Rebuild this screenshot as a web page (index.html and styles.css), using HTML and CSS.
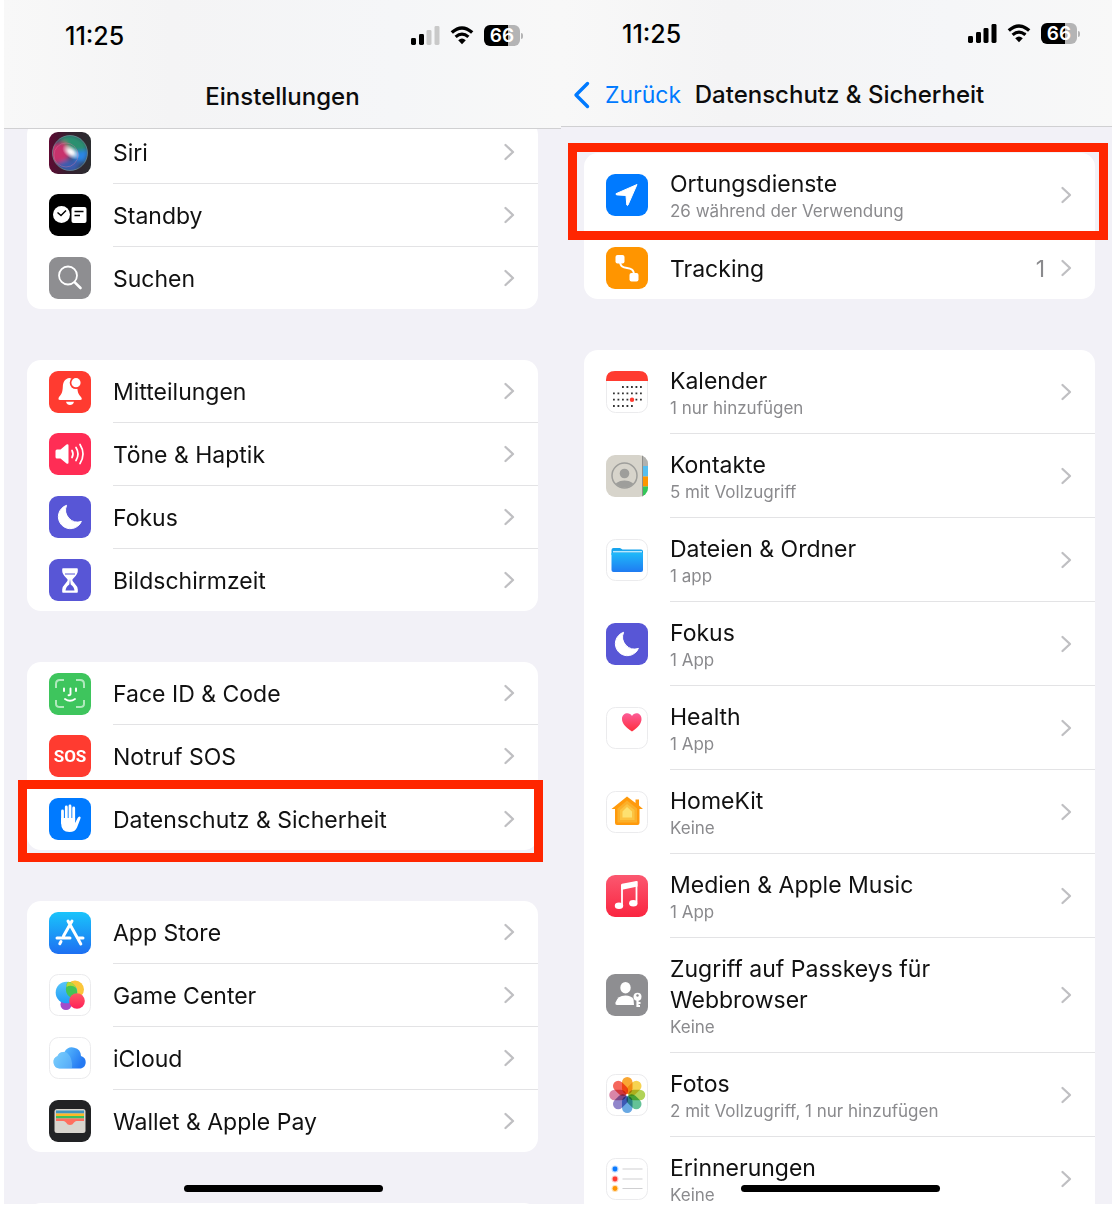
FILE: index.html
```
<!DOCTYPE html>
<html lang="de">
<head>
  <meta charset="UTF-8" />
  <meta name="viewport" content="width=device-width, initial-scale=1.0"/>
  <title>Einstellungen</title>
  <link rel="stylesheet" href="styles.css">
</head>
<body>
  <svg class="sprite" aria-hidden="true">
    <symbol id="chevron" viewBox="0 0 12 18">
      <path d="M2.500 2 L10 9 L2.500 16" fill="none" stroke="#bfbfc2" stroke-width="2.300" stroke-linecap="round" stroke-linejoin="round"/>
    </symbol>
    <symbol id="wifi" viewBox="0 0 24 19">
      <path d="M1.8 6.6 Q12 -2.6 22.2 6.6" fill="none" stroke="#000" stroke-width="3.4"/>
      <path d="M5.6 10.9 Q12 5.2 18.4 10.9" fill="none" stroke="#000" stroke-width="3.2"/>
      <path d="M8.2 14.2 Q12 11 15.8 14.2 L12 18.3 Z" fill="#000"/>
    </symbol>
    <symbol id="moon" viewBox="0 0 42 42">
      <path d="M17.6 9.3 A12 12 0 1 0 32.4 25.4 A12 12 0 0 1 17.6 9.3 Z" fill="#fff" stroke="#fff" stroke-width="1" stroke-linejoin="round"/>
    </symbol>
  </svg>

  <main class="screens">

    <section class="phone">
      <header class="bar">
        <div class="status">
          <span class="time">11:25</span>
          <svg class="signal" viewBox="0 0 29 19">
            <rect x="0" y="12" width="5" height="7" rx="1.4"/>
            <rect x="8" y="8" width="5" height="11" rx="1.4"/>
            <rect x="15.500" y="4" width="5" height="15" rx="1.4" fill="#c9c9c9"/>
            <rect x="23.500" y="0" width="5" height="19" rx="1.4" fill="#c9c9c9"/>
          </svg>
          <svg class="wifi"><use href="#wifi"/></svg>
          <span class="battery">66</span>
        </div>
        <div class="nav">
          <h1>Einstellungen</h1>
        </div>
      </header>

      <div class="list scrolled">
        <ul class="group">
          <li><a class="row" href="#">
            <svg class="icon" viewBox="0 0 42 42">
              <defs>
                <linearGradient id="siriBg"><stop offset="0" stop-color="#5e0a33"/><stop offset=".45" stop-color="#34202f"/><stop offset="1" stop-color="#2b2d30"/></linearGradient>
                <radialGradient id="siriGlow"><stop offset="0" stop-color="#fff"/><stop offset=".3" stop-color="#fff" stop-opacity=".85"/><stop offset="1" stop-color="#fff" stop-opacity="0"/></radialGradient>
                <clipPath id="siriOrb"><circle cx="21" cy="21" r="17.500"/></clipPath>
                <filter id="soft"><feGaussianBlur stdDeviation="2.2"/></filter>
              </defs>
              <rect width="42" height="42" rx="9" fill="url(#siriBg)"/>
              <g clip-path="url(#siriOrb)">
                <rect width="42" height="42" fill="#2f4a6a"/>
                <g filter="url(#soft)">
                  <path d="M10 6 Q24 -2 38 12 L36 22 L20 18 Z" fill="#2c9070"/>
                  <path d="M2 12 L16 10 L22 22 L14 32 L2 30 Z" fill="#c9306c"/>
                  <path d="M22 20 L40 18 L36 30 L26 28 Z" fill="#2a86e6"/>
                  <path d="M8 32 Q20 24 32 30 L26 40 L12 38 Z" fill="#3b5cae"/>
                </g>
                <ellipse cx="22" cy="20" rx="10" ry="6" fill="url(#siriGlow)" transform="rotate(35 22 20)"/>
              </g>
              <circle cx="21" cy="21" r="17.500" fill="none" stroke="#7fa6a4" stroke-width=".8" opacity=".7"/>
              <circle cx="17" cy="23" r="12" fill="none" stroke="#e07aa6" stroke-width=".6" opacity=".6"/>
            </svg>
            <span class="body"><span class="title">Siri</span><svg class="chevron"><use href="#chevron"/></svg></span>
          </a></li>
          <li><a class="row" href="#">
            <svg class="icon" viewBox="0 0 42 42">
              <rect width="42" height="42" rx="9"/>
              <circle cx="12.500" cy="20.500" r="8.500" fill="#fff"/>
              <path d="M8.500 18.500 L12 21.500 L17 16.500" fill="none" stroke="#000" stroke-width="1.500"/>
              <rect x="22.500" y="13" width="15" height="16" rx="2" fill="#fff"/>
              <path d="M25.500 17.500 H34.500 M25.500 21.500 H31" stroke="#000" stroke-width="1.500"/>
            </svg>
            <span class="body"><span class="title">Standby</span><svg class="chevron"><use href="#chevron"/></svg></span>
          </a></li>
          <li><a class="row" href="#">
            <svg class="icon" viewBox="0 0 42 42">
              <rect width="42" height="42" rx="9" fill="#8e8e91"/>
              <circle cx="19" cy="18.500" r="9" fill="none" stroke="#fff" stroke-width="1.800"/>
              <path d="M25.800 25.300 L31.500 31" stroke="#fff" stroke-width="2.600" stroke-linecap="round"/>
            </svg>
            <span class="body"><span class="title">Suchen</span><svg class="chevron"><use href="#chevron"/></svg></span>
          </a></li>
        </ul>

        <ul class="group">
          <li><a class="row" href="#">
            <svg class="icon" viewBox="0 0 42 42">
              <rect width="42" height="42" rx="9" fill="#ff3b30"/>
              <path d="M20.500 7 C16 7.500 14 11 13.800 16 C13.600 21 12.500 23.500 10 26 Q8.500 29 11 29 H31 Q34 29 32 26 C29.500 23.500 28.500 21 28.300 16 L26 8 Z" fill="#fff"/>
              <path d="M17 30.700 H25 Q24 34 21 34 Q18 34 17 30.700 Z" fill="#fff"/>
              <circle cx="27" cy="11.700" r="6.300" fill="#ff3b30"/>
              <circle cx="27" cy="11.700" r="4.600" fill="#fff"/>
            </svg>
            <span class="body"><span class="title">Mitteilungen</span><svg class="chevron"><use href="#chevron"/></svg></span>
          </a></li>
          <li><a class="row" href="#">
            <svg class="icon" viewBox="0 0 42 42">
              <rect width="42" height="42" rx="9" fill="#ff2d55"/>
              <path d="M8 16.500 H11.500 L17.500 11.500 Q19.500 10.500 19.500 12.500 V29.500 Q19.500 31.500 17.500 30.500 L11.500 25.500 H8 Q6.500 25.500 6.500 24 V18 Q6.500 16.500 8 16.500 Z" fill="#fff"/>
              <g fill="none" stroke="#fff" stroke-width="1.700" stroke-linecap="round">
                <path d="M23 17.500 Q25 21 23 24.500"/>
                <path d="M27 14.500 Q31 21 27 27.500"/>
                <path d="M31 11.500 Q37 21 31 30.500"/>
              </g>
            </svg>
            <span class="body"><span class="title">Töne &amp; Haptik</span><svg class="chevron"><use href="#chevron"/></svg></span>
          </a></li>
          <li><a class="row" href="#">
            <svg class="icon" viewBox="0 0 42 42">
              <rect width="42" height="42" rx="9" fill="#5856d6"/>
              <use href="#moon"/>
            </svg>
            <span class="body"><span class="title">Fokus</span><svg class="chevron"><use href="#chevron"/></svg></span>
          </a></li>
          <li><a class="row" href="#">
            <svg class="icon" viewBox="0 0 42 42">
              <rect width="42" height="42" rx="9" fill="#5856d6"/>
              <path d="M14 10 H28 V12 C28 16.500 22.500 18.500 22.500 21 C22.500 24 28 26 28 30.500 V33 H14 V30.500 C14 26 19.500 24 19.500 21 C19.500 18.500 14 16.500 14 12 Z" fill="#fff" stroke="#fff" stroke-width="1.600" stroke-linejoin="round"/>
              <path d="M16 15 H26" stroke="#5856d6" stroke-width="1"/>
              <path d="M16.500 31.500 Q17 27.500 20.300 25.500 L21 20 L21.700 25.500 Q25 27.500 25.500 31.500 Z" fill="#5856d6"/>
            </svg>
            <span class="body"><span class="title">Bildschirmzeit</span><svg class="chevron"><use href="#chevron"/></svg></span>
          </a></li>
        </ul>

        <ul class="group">
          <li><a class="row" href="#">
            <svg class="icon" viewBox="0 0 42 42">
              <rect width="42" height="42" rx="9" fill="#3ec55d"/>
              <path d="M7 15 V11 Q7 7 11 7 H15 M27 7 H31 Q35 7 35 11 V15 M35 27 V31 Q35 34 31 34 H27 M15 34 H11 Q7 34 7 31 V27" fill="none" stroke="#b0e9bd" stroke-width="2"/>
              <path d="M15 15.500 V18 M27 15.500 V18 M21.500 15.500 V21 Q21.500 22.500 19.500 22.200 M16 26 Q21 29.500 26 26" fill="none" stroke="#fff" stroke-width="1.900" stroke-linecap="round"/>
            </svg>
            <span class="body"><span class="title">Face ID &amp; Code</span><svg class="chevron"><use href="#chevron"/></svg></span>
          </a></li>
          <li><a class="row" href="#">
            <svg class="icon" viewBox="0 0 42 42">
              <rect width="42" height="42" rx="9" fill="#ff3b30"/>
              <text class="sos" x="21" y="27" text-anchor="middle">SOS</text>
            </svg>
            <span class="body"><span class="title">Notruf SOS</span><svg class="chevron"><use href="#chevron"/></svg></span>
          </a></li>
          <li class="marked marked-last"><a class="row" href="#">
            <svg class="icon" viewBox="0 0 42 42">
              <rect width="42" height="42" rx="9" fill="#007aff"/>
              <path d="M13.500 13 V25 M17.300 9 V22 M21 8 V22 M24.700 10 V23" stroke="#fff" stroke-width="2.800" stroke-linecap="round"/>
              <path d="M12.100 20 H26.100 V25 L28.600 20 Q30 17.500 31.500 19 Q31.800 19.500 31.300 21 L28 29.500 Q26 34 20.500 34 Q12.100 34 12.100 25 Z" fill="#fff"/>
            </svg>
            <span class="body"><span class="title">Datenschutz &amp; Sicherheit</span><svg class="chevron"><use href="#chevron"/></svg></span>
          </a></li>
        </ul>

        <ul class="group">
          <li><a class="row" href="#">
            <svg class="icon" viewBox="0 0 42 42">
              <defs><linearGradient id="store" x2="0" y2="1"><stop offset="0" stop-color="#1ac4fb"/><stop offset="1" stop-color="#1d6ff2"/></linearGradient></defs>
              <rect width="42" height="42" rx="9" fill="url(#store)"/>
              <path d="M23 9 L14.500 24 M19 9 L31.800 32 M12 29.500 L10.800 31.700 M8 26 H21 M28.500 26 H34" fill="none" stroke="#fff" stroke-width="3" stroke-linecap="round"/>
            </svg>
            <span class="body"><span class="title">App Store</span><svg class="chevron"><use href="#chevron"/></svg></span>
          </a></li>
          <li><a class="row" href="#">
            <svg class="icon" viewBox="0 0 42 42">
              <defs>
                <linearGradient id="gcBlue" x2="0" y2="1"><stop offset="0" stop-color="#58c6fa"/><stop offset="1" stop-color="#1e9bf6"/></linearGradient>
                <linearGradient id="gcRed" x2="0" y2="1"><stop offset="0" stop-color="#ff5a63"/><stop offset="1" stop-color="#ff2058"/></linearGradient>
              </defs>
              <rect class="tile" x=".5" y=".5" width="41" height="41" rx="9"/>
              <circle cx="17" cy="30.500" r="5.500" fill="#a44ac9"/>
              <circle cx="26" cy="15.500" r="9" fill="#fbc63a"/>
              <circle cx="17.500" cy="18.500" r="10.800" fill="url(#gcBlue)"/>
              <path d="M17.500 12 A9 9 0 0 0 21 23 Q25 24 27.500 22 A10.800 10.800 0 0 0 19 7.800 Q17 10 17.500 12 Z" fill="#44c556"/>
              <path d="M19 8 Q25 8 27.500 14 Q22 10 17.500 13 Q17 10 19 8 Z" fill="#b5d636"/>
              <circle cx="28" cy="27" r="7.800" fill="url(#gcRed)"/>
            </svg>
            <span class="body"><span class="title">Game Center</span><svg class="chevron"><use href="#chevron"/></svg></span>
          </a></li>
          <li><a class="row" href="#">
            <svg class="icon" viewBox="0 0 42 42">
              <defs><linearGradient id="cloud" y2=".4"><stop offset="0" stop-color="#7ccffb"/><stop offset=".5" stop-color="#4aa9fa"/><stop offset="1" stop-color="#2579f2"/></linearGradient></defs>
              <rect class="tile" x=".5" y=".5" width="41" height="41" rx="9"/>
              <path d="M10.500 31.500 A6.500 6.500 0 0 1 8.500 19 A6.500 6.500 0 0 1 15.500 15 A8.800 8.800 0 0 1 32 19 A6.500 6.500 0 0 1 32 31.500 Z" fill="url(#cloud)"/>
              <path d="M10.500 31.500 A6.500 6.500 0 0 1 8.500 19 A6.500 6.500 0 0 1 18 15.800 Q24 21 23 31.500 Z" fill="#8bd6fd" opacity=".4"/>
            </svg>
            <span class="body"><span class="title">iCloud</span><svg class="chevron"><use href="#chevron"/></svg></span>
          </a></li>
          <li><a class="row" href="#">
            <svg class="icon" viewBox="0 0 42 42">
              <rect width="42" height="42" rx="9" fill="#222325"/>
              <rect x="5.500" y="9" width="31" height="24" rx="2.500" fill="#d9d6cf"/>
              <path d="M7 10.500 H35 V13.500 H7 Z" fill="#3f93bd"/>
              <path d="M7 13.500 H35 V16 H7 Z" fill="#fdb827"/>
              <path d="M7 16 H35 V18.500 H7 Z" fill="#3dbf5d"/>
              <path d="M7 18.500 H35 V21 H27.500 Q26 21 25 22.500 Q23.500 25 21 25 Q18.500 25 17 22.500 Q16 21 14.500 21 H7 Z" fill="#ff6f5e"/>
            </svg>
            <span class="body"><span class="title">Wallet &amp; Apple Pay</span><svg class="chevron"><use href="#chevron"/></svg></span>
          </a></li>
        </ul>

        <!-- next group just peeks in at the bottom edge -->
        <ul class="group group-peek"></ul>
      </div>
      <div class="home-indicator"></div>
    </section>

    <section class="phone">
      <header class="bar bar-detail">
        <div class="status">
          <span class="time">11:25</span>
          <svg class="signal" viewBox="0 0 29 19">
            <rect x="0" y="12" width="5" height="7" rx="1.4"/>
            <rect x="8" y="8" width="5" height="11" rx="1.4"/>
            <rect x="15.500" y="4" width="5" height="15" rx="1.4"/>
            <rect x="23.500" y="0" width="5" height="19" rx="1.4"/>
          </svg>
          <svg class="wifi"><use href="#wifi"/></svg>
          <span class="battery">66</span>
        </div>
        <div class="nav">
          <a class="back" href="#">
            <svg viewBox="0 0 17 28"><path d="M14.500 2.500 L3 14 L14.500 25.500" fill="none" stroke="#007aff" stroke-width="3.400" stroke-linecap="round" stroke-linejoin="round"/></svg>
            Zurück
          </a>
          <h1>Datenschutz &amp; Sicherheit</h1>
        </div>
      </header>

      <div class="list">
        <ul class="group">
          <li class="marked marked-first"><a class="row" href="#">
            <svg class="icon" viewBox="0 0 42 42">
              <rect width="42" height="42" rx="9" fill="#007aff"/>
              <path d="M31 10.500 L10 19.700 Q9.700 20.800 11 20.900 L20 21.500 L20.800 31 Q21.300 32 22 31 Z" fill="#fff" stroke="#fff" stroke-width="1" stroke-linejoin="round"/>
            </svg>
            <span class="body"><span class="title">Ortungsdienste<small>26 während der Verwendung</small></span><svg class="chevron"><use href="#chevron"/></svg></span>
          </a></li>
          <li><a class="row" href="#">
            <svg class="icon" viewBox="0 0 42 42">
              <rect width="42" height="42" rx="9" fill="#ff9500"/>
              <path d="M14 14 C14 26 28 16 28 28" fill="none" stroke="#fff" stroke-width="1.900"/>
              <rect x="9.500" y="8" width="9" height="8.500" rx="2" fill="#fff"/>
              <rect x="23.500" y="26" width="9" height="8.500" rx="2" fill="#fff"/>
            </svg>
            <span class="body"><span class="title">Tracking</span><span class="value">1</span><svg class="chevron"><use href="#chevron"/></svg></span>
          </a></li>
        </ul>

        <ul class="group">
          <li><a class="row" href="#">
            <svg class="icon" viewBox="0 0 42 42">
              <rect class="tile" x=".5" y=".5" width="41" height="41" rx="9"/>
              <path d="M0 10 V9 Q0 0 9 0 H33 Q42 0 42 9 V10 Z" fill="#ff3b30"/>
              <g fill="none" stroke="#333" stroke-width="1.800" stroke-dasharray="1.800 2.700">
                <path d="M16 16 H36"/>
                <path d="M7 22.300 H36"/>
                <path d="M7 28.700 H36"/>
                <path d="M7 35 H27"/>
              </g>
              <circle cx="26" cy="28.700" r="2.200" fill="#ff3b30"/>
            </svg>
            <span class="body"><span class="title">Kalender<small>1 nur hinzufügen</small></span><svg class="chevron"><use href="#chevron"/></svg></span>
          </a></li>
          <li><a class="row" href="#">
            <svg class="icon" viewBox="0 0 42 42">
              <defs>
                <clipPath id="book"><rect width="42" height="42" rx="9"/></clipPath>
                <clipPath id="face"><circle cx="18.500" cy="20.500" r="12"/></clipPath>
              </defs>
              <g clip-path="url(#book)">
                <rect width="42" height="42" fill="#d7d4cb"/>
                <rect x="36.500" width="6" height="11" fill="#b1b1ae"/>
                <rect x="36.500" y="11" width="6" height="10.500" fill="#55bef0"/>
                <rect x="36.500" y="21.500" width="6" height="10" fill="#ff9500"/>
                <rect x="36.500" y="31.500" width="6" height="11" fill="#34c759"/>
                <path d="M36.500 0 V42" stroke="#8f8f8c" stroke-width="1"/>
              </g>
              <g clip-path="url(#face)" fill="#9e9e9b">
                <circle cx="18.500" cy="18.500" r="4.800"/>
                <ellipse cx="18.500" cy="33" rx="11" ry="7.500"/>
              </g>
              <circle cx="18.500" cy="20.500" r="12.500" fill="none" stroke="#9e9e9b" stroke-width="1.500"/>
            </svg>
            <span class="body"><span class="title">Kontakte<small>5 mit Vollzugriff</small></span><svg class="chevron"><use href="#chevron"/></svg></span>
          </a></li>
          <li><a class="row" href="#">
            <svg class="icon" viewBox="0 0 42 42">
              <defs><linearGradient id="folder" x2="0" y2="1"><stop offset="0" stop-color="#1fb9f9"/><stop offset="1" stop-color="#1f7bf2"/></linearGradient></defs>
              <rect class="tile" x=".5" y=".5" width="41" height="41" rx="9"/>
              <path d="M5.500 11 Q5.500 9 7.500 9 H14 L16.500 10.500 H35 Q37 10.500 37 12.500 V16 H5.500 Z" fill="#17a4ee"/>
              <path d="M7 12.700 H36" stroke="#b8e8fd" stroke-width="1.500"/>
              <path d="M5.500 14 H37 V31 Q37 33 35 33 H7.500 Q5.500 33 5.500 31 Z" fill="url(#folder)"/>
            </svg>
            <span class="body"><span class="title">Dateien &amp; Ordner<small>1 app</small></span><svg class="chevron"><use href="#chevron"/></svg></span>
          </a></li>
          <li><a class="row" href="#">
            <svg class="icon" viewBox="0 0 42 42">
              <rect width="42" height="42" rx="9" fill="#5856d6"/>
              <use href="#moon"/>
            </svg>
            <span class="body"><span class="title">Fokus<small>1 App</small></span><svg class="chevron"><use href="#chevron"/></svg></span>
          </a></li>
          <li><a class="row" href="#">
            <svg class="icon" viewBox="0 0 42 42">
              <defs><linearGradient id="heart" x2="0" y2="1"><stop offset="0" stop-color="#fc5c97"/><stop offset="1" stop-color="#ff2d3c"/></linearGradient></defs>
              <rect class="tile" x=".5" y=".5" width="41" height="41" rx="9"/>
              <path d="M26 24.500 C20 20.500 16 16.500 16 12 C16 5.800 23.500 4.500 26 9 C28.500 4.500 35.500 5.800 35.500 12 C35.500 16.500 32 20.500 26 24.500 Z" fill="url(#heart)"/>
            </svg>
            <span class="body"><span class="title">Health<small>1 App</small></span><svg class="chevron"><use href="#chevron"/></svg></span>
          </a></li>
          <li><a class="row" href="#">
            <svg class="icon" viewBox="0 0 42 42">
              <rect class="tile" x=".5" y=".5" width="41" height="41" rx="9"/>
              <path d="M21 5.500 L29.500 12 V8.500 H33 V14.500 L37 18 H33.500 V32 Q33.500 34 31.500 34 H11 Q9 34 9 32 V18 H5.500 Z" fill="#ff9a0c"/>
              <path d="M21 9.500 L31 17.500 V31.500 H11.500 V17.500 Z" fill="#fbb02a"/>
              <path d="M21 13 L28.500 19 V29 H14 V19 Z" fill="#fcc341"/>
              <path d="M21 16 L26 20.500 V26.500 H16.500 V20.500 Z" fill="#fde170"/>
            </svg>
            <span class="body"><span class="title">HomeKit<small>Keine</small></span><svg class="chevron"><use href="#chevron"/></svg></span>
          </a></li>
          <li><a class="row" href="#">
            <svg class="icon" viewBox="0 0 42 42">
              <defs><linearGradient id="music" x2="0" y2="1"><stop offset="0" stop-color="#fb5870"/><stop offset="1" stop-color="#fa2540"/></linearGradient></defs>
              <rect width="42" height="42" rx="9" fill="url(#music)"/>
              <path d="M16 30 V11 L30.500 7.500 V27.500" fill="none" stroke="#fff" stroke-width="1.800"/>
              <path d="M15 10 Q15 9 16 8.800 L30.500 6 Q31.500 6 31.500 7 V11.500 L15 15 Z" fill="#fff"/>
              <ellipse cx="13" cy="30.700" rx="4.200" ry="3.300" fill="#fff"/>
              <ellipse cx="27.300" cy="28.200" rx="4.200" ry="3.300" fill="#fff"/>
            </svg>
            <span class="body"><span class="title">Medien &amp; Apple Music<small>1 App</small></span><svg class="chevron"><use href="#chevron"/></svg></span>
          </a></li>
          <li><a class="row" href="#">
            <svg class="icon" viewBox="0 0 42 42">
              <rect width="42" height="42" rx="9" fill="#8e8e91"/>
              <ellipse cx="19.500" cy="13.700" rx="5.200" ry="5.800" fill="#fff"/>
              <path d="M11 31 Q9 31 9.500 28.500 Q11.500 21.500 19.500 21.500 Q25 21.500 27.500 25 L28 31 Z" fill="#fff"/>
              <circle cx="31.500" cy="22.700" r="4" fill="#fff"/>
              <path d="M31.500 25 V33 M32 29 H34.500 M32 32 H34" stroke="#fff" stroke-width="2.200"/>
              <circle cx="31.500" cy="21.500" r="1.200" fill="#8e8e91"/>
            </svg>
            <span class="body"><span class="title">Zugriff auf Passkeys für Webbrowser<small>Keine</small></span><svg class="chevron"><use href="#chevron"/></svg></span>
          </a></li>
          <li><a class="row" href="#">
            <svg class="icon" viewBox="0 0 42 42">
              <rect class="tile" x=".5" y=".5" width="41" height="41" rx="9"/>
              <g class="petals">
                <rect x="16" y="3" width="10.500" height="17" rx="5.250" fill="#f99d1c"/>
                <rect x="16" y="3" width="10.500" height="17" rx="5.250" fill="#f5ce3e" transform="rotate(45 21.250 21)"/>
                <rect x="16" y="3" width="10.500" height="17" rx="5.250" fill="#a9cf46" transform="rotate(90 21.250 21)"/>
                <rect x="16" y="3" width="10.500" height="17" rx="5.250" fill="#53bb8c" transform="rotate(135 21.250 21)"/>
                <rect x="16" y="3" width="10.500" height="17" rx="5.250" fill="#589fe0" transform="rotate(180 21.250 21)"/>
                <rect x="16" y="3" width="10.500" height="17" rx="5.250" fill="#8579c6" transform="rotate(225 21.250 21)"/>
                <rect x="16" y="3" width="10.500" height="17" rx="5.250" fill="#d5789f" transform="rotate(270 21.250 21)"/>
                <rect x="16" y="3" width="10.500" height="17" rx="5.250" fill="#f4564a" transform="rotate(315 21.250 21)"/>
              </g>
            </svg>
            <span class="body"><span class="title">Fotos<small>2 mit Vollzugriff, 1 nur hinzufügen</small></span><svg class="chevron"><use href="#chevron"/></svg></span>
          </a></li>
          <li><a class="row" href="#">
            <svg class="icon" viewBox="0 0 42 42">
              <rect class="tile" x=".5" y=".5" width="41" height="41" rx="9"/>
              <path d="M16.500 11 H36.500 M16.500 21 H36.500 M16.500 30.500 H36.500" stroke="#cfcfd1" stroke-width="1.200"/>
              <circle cx="9" cy="11" r="3.500" fill="#b5d6fd"/><circle cx="9" cy="11" r="2.400" fill="#0a7aff"/>
              <circle cx="9" cy="21" r="3.500" fill="#fdc3c0"/><circle cx="9" cy="21" r="2.400" fill="#ff3b30"/>
              <circle cx="9" cy="30.500" r="3.500" fill="#fde0b4"/><circle cx="9" cy="30.500" r="2.400" fill="#ff9500"/>
            </svg>
            <span class="body"><span class="title">Erinnerungen<small>Keine</small></span><svg class="chevron"><use href="#chevron"/></svg></span>
          </a></li>
        </ul>
      </div>
      <div class="home-indicator"></div>
    </section>

  </main>
</body>
</html>
```
FILE: styles.css
```
* {
  box-sizing: border-box;
  margin: 0;
  padding: 0;
}

body {
  font-family: Inter, 'Liberation Sans', sans-serif;
  background-color: #fff;
  color: #111;
  overflow: hidden;
}

a {
  color: inherit;
  text-decoration: none;
}

ul {
  list-style: none;
}

.sprite {
  display: none;
}

.screens {
  display: grid;
  grid-template-columns: 1fr 1fr;
  height: calc(100vh - 4px);
  margin-left: 4px;
  margin-right: -6px;
}

.phone {
  position: relative;
  display: flex;
  flex-direction: column;
  min-height: 0;
  overflow: hidden;
  background-color: #f2f1f7;
}

/* Header */
.bar {
  position: relative;
  z-index: 1;
  flex: none;
  padding-top: 20px;
  background: linear-gradient(90deg, #f8f8f8, #f4f4f5 30%, #f5f6f8 70%, #f8f8f8);
  border-bottom: 1px solid #d0d0d2;
}

.bar-detail {
  padding-top: 18px;
}

.status {
  display: flex;
  align-items: center;
  height: 31px;
  padding: 0 41px 0 61px;
}

.time {
  flex: 1;
  font-size: 25px;
  font-weight: 500;
  line-height: 30px;
  color: #000;
}

.signal {
  width: 29px;
  height: 19px;
  margin-right: 10px;
}

.wifi {
  width: 24px;
  height: 19px;
  margin-right: 10px;
}

.battery {
  position: relative;
  width: 36px;
  height: 21px;
  border-radius: 6px;
  background: linear-gradient(90deg, #000 66%, #b4b4b5 66%);
  color: #fff;
  font-size: 19px;
  font-weight: 600;
  line-height: 21px;
  text-align: center;
}

.battery::after {
  content: "";
  position: absolute;
  top: 8px;
  right: -3px;
  width: 2px;
  height: 6px;
  border-radius: 0 2px 2px 0;
  background-color: #b4b4b5;
}

.nav {
  position: relative;
  display: flex;
  align-items: center;
  justify-content: center;
  height: 77px;
  padding-bottom: 6px;
  padding-top: 20px;
}

.nav h1 {
  font-size: 24px;
  font-weight: 500;
  line-height: 30px;
  white-space: nowrap;
  color: #0c0c0c;
}

.back {
  position: absolute;
  left: 12px;
  display: flex;
  align-items: center;
  gap: 15px;
  font-size: 23px;
  line-height: 30px;
  color: #007aff;
}

.back svg {
  width: 17px;
  height: 28px;
}

/* List */
.list {
  flex: 1;
  min-height: 0;
  padding: 26px 23px 0;
}

.list.scrolled {
  padding-top: 0;
  margin-top: -8px;
}

.group {
  margin-bottom: 51px;
  border-radius: 14px;
  background-color: #fff;
}

.group-peek {
  height: 62px;
}

.row {
  display: flex;
  align-items: center;
  gap: 22px;
  padding-left: 22px;
}

.icon {
  flex: none;
  width: 42px;
  height: 42px;
  margin-top: 1px;
}

.tile {
  fill: #fff;
  stroke: #ebebed;
}

.sos {
  font-family: Roboto, sans-serif;
  font-size: 17px;
  font-weight: 700;
  fill: #fff;
}

.petals {
  isolation: isolate;
}

.petals rect {
  mix-blend-mode: multiply;
  opacity: 0.9;
}

.body {
  flex: 1;
  display: flex;
  align-items: center;
  min-height: 62px;
  padding-right: 23px;
}

li + li .body {
  min-height: 63px;
  border-top: 1px solid #e3e3e5;
}

.title {
  flex: 1;
  max-width: 330px;
  margin-right: auto;
  padding-top: 2px;
  font-size: 23px;
  line-height: 31px;
}

.title:has(small) {
  padding: 16px 0 13px;
}

.title small {
  display: block;
  font-size: 17px;
  line-height: 23px;
  color: #8a8a8d;
}

.value {
  margin-right: 15px;
  padding-top: 2px;
  font-size: 23px;
  line-height: 31px;
  color: #8a8a8d;
}

.chevron {
  flex: none;
  width: 12px;
  height: 18px;
}

/* Red frames around the entries to tap */
.marked {
  position: relative;
}

.marked::after {
  content: "";
  position: absolute;
  z-index: 1;
  border: 9px solid #ff2600;
  pointer-events: none;
}

.marked-first::after {
  inset: -10px -13px -4px -16px;
}

.marked-last::after {
  inset: -7px -5px -12px -9px;
}

.home-indicator {
  position: absolute;
  z-index: 2;
  bottom: 12px;
  left: 50%;
  width: 199px;
  height: 7px;
  margin-left: -99px;
  border-radius: 4px;
  background-color: #000;
}
```
